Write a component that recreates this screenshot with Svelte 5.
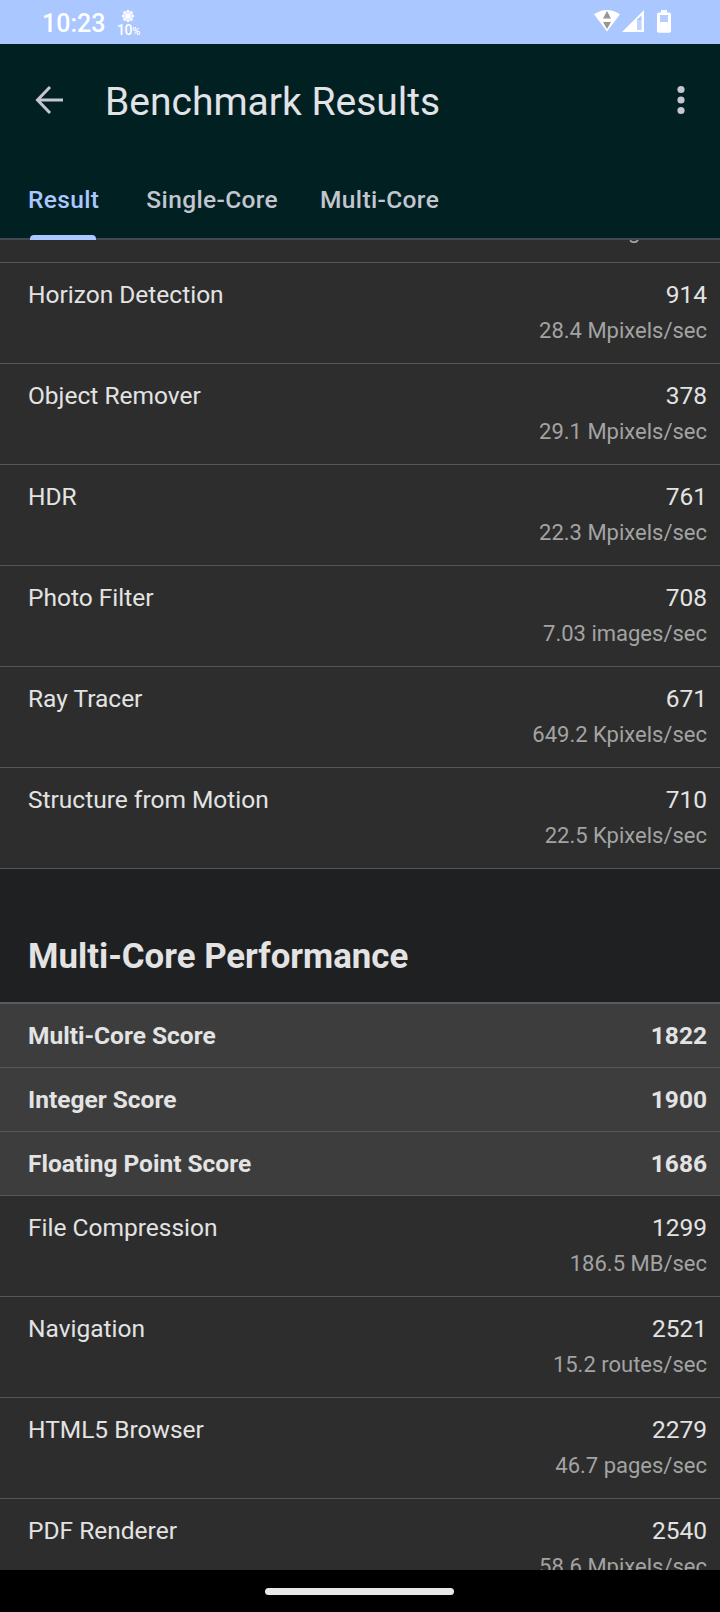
<script>
  const tabs = ['Result', 'Single-Core', 'Multi-Core'];
  const single = [
    ['Horizon Detection', '914', '28.4 Mpixels/sec'],
    ['Object Remover', '378', '29.1 Mpixels/sec'],
    ['HDR', '761', '22.3 Mpixels/sec'],
    ['Photo Filter', '708', '7.03 images/sec'],
    ['Ray Tracer', '671', '649.2 Kpixels/sec'],
    ['Structure from Motion', '710', '22.5 Kpixels/sec']
  ];
  const scores = [
    ['Multi-Core Score', '1822'],
    ['Integer Score', '1900'],
    ['Floating Point Score', '1686']
  ];
  const multi = [
    ['File Compression', '1299', '186.5 MB/sec'],
    ['Navigation', '2521', '15.2 routes/sec'],
    ['HTML5 Browser', '2279', '46.7 pages/sec'],
    ['PDF Renderer', '2540', '58.6 Mpixels/sec']
  ];
</script>

{#snippet row([name, score, rate])}
  <div class="row">
    <span>{name}</span>
    <div class="values">
      <span>{score}</span>
      <span class="rate">{rate}</span>
    </div>
  </div>
{/snippet}

<div class="screen">
  <div class="status">
    <span class="time">10:23</span>
    <div class="brightness">
      <svg width="14" height="14" viewBox="0 0 14 14">
        <path d="M7 .3L8.700 2.500 11.700 2.300 11.500 5.300 13.700 7 11.500 8.700 11.700 11.700 8.700 11.500 7 13.700 5.300 11.500 2.300 11.700 2.500 8.700 .3 7 2.500 5.300 2.300 2.300 5.300 2.500Z" fill="#fff" />
        <circle cx="7" cy="7" r="3.400" fill="none" stroke="#aac7ff" stroke-width=".6" />
      </svg>
      <span class="pct">10<small>%</small></span>
    </div>
    <svg class="signals" width="80" height="26" viewBox="0 0 80 26">
      <path d="M0 6.300Q13-2.500 26 6.300L13 23.500Z" fill="#fff" />
      <path d="M13 3l4 7.500H9ZM9 14h8L13 21Z" fill="#969696" />
      <path fill-rule="evenodd" d="M28 24L50 2V24ZM43 11.500V22H47.500V7.500Z" fill="#fff" />
      <path d="M43 12H47.500V22H43Z" fill="#fff" opacity=".25" />
      <path d="M67 2h6v2.500h2.200q1.800 0 1.800 1.800V23q0 1.800-1.800 1.800H64.800q-1.800 0-1.800-1.800V6.300q0-1.800 1.800-1.800h2.200Z" fill="#fff" />
      <path d="M66 7h8v7h-8Z" fill="#b6ceff" />
    </svg>
  </div>

  <header>
    <div class="bar">
      <svg class="back" width="30" height="30" viewBox="0 0 30 30" fill="none" stroke="#c7c6d0" stroke-width="3">
        <path d="M16 2L3.500 15l12.500 13M3 15h26" />
      </svg>
      <h1>Benchmark Results</h1>
      <svg class="more" width="8" height="30" viewBox="0 0 8 30" fill="#c7c6d0">
        <circle cx="4" cy="4.500" r="3.600" /><circle cx="4" cy="15" r="3.600" /><circle cx="4" cy="25.500" r="3.600" />
      </svg>
    </div>
    <nav>
      {#each tabs as tab, i}
        <div class="tab" class:active={i === 0}>{tab}</div>
      {/each}
    </nav>
  </header>

  <main>
    <div class="clipped"><span class="rate">images/sec</span></div>
    {#each single as item}{@render row(item)}{/each}
    <h2>Multi-Core Performance</h2>
    {#each scores as [name, score]}
      <div class="row score"><span>{name}</span><span>{score}</span></div>
    {/each}
    {#each multi as item}{@render row(item)}{/each}
  </main>

  <footer><div class="handle"></div></footer>
</div>

<style>
  :global(body) { margin: 0; background: #000; }
  .screen {
    width: 720px; height: 1612px; display: flex; flex-direction: column;
    overflow: hidden; font-family: Roboto, sans-serif; color: #e3e3e3;
  }
  .status {
    height: 44px; flex: none; box-sizing: border-box; background: #aac7ff; color: #fff;
    display: flex; align-items: flex-start; padding: 8px 46px 0 42px;
  }
  .time { font-size: 25px; line-height: 32px; font-weight: 500; }
  .brightness { display: flex; flex-direction: column; align-items: center; margin: 1px 0 0 12px; width: 22px; }
  .brightness svg { display: block; }
  .pct { font-size: 14px; line-height: 14px; font-weight: 500; white-space: nowrap; letter-spacing: -.4px; }
  small { font-size: 11px; }
  .signals { margin-left: auto; }
  header { height: 196px; flex: none; box-sizing: border-box; background: #002022; border-bottom: 2px solid #43474e; }
  .bar { height: 113px; display: flex; align-items: center; padding: 0 35px 0 34px; }
  .back, .more { margin-bottom: 2px; }
  h1 { margin: 2px auto 0 41px; font-size: 39px; line-height: 46px; font-weight: 400; color: #e3e2e6; }
  nav { display: flex; height: 81px; padding-left: 28px; gap: 47px; font-size: 24.5px; font-weight: 500; color: #c3c6cf; }
  .tab { line-height: 85px; height: 83px; position: relative; letter-spacing: .36px; }
  .tab:last-child { margin-left: -5px; }
  .active { color: #aac7ff; }
  .active::after {
    content: ''; position: absolute; left: 2px; width: 66px; bottom: 0; height: 5px;
    background: #aac7ff; border-radius: 4px 4px 0 0;
  }
  main { flex: 1; min-height: 0; overflow: hidden; background: #1f2022; display: flex; flex-direction: column; }
  .clipped {
    height: 23px; flex: none; box-sizing: border-box; background: #2d2d2d; border-bottom: 1px solid #565656;
    display: flex; align-items: flex-end; justify-content: flex-end; padding: 0 13px 18px 0; overflow: hidden;
  }
  .row {
    height: 101px; flex: none; box-sizing: border-box; display: flex; justify-content: space-between;
    padding: 18px 13px 0 28px; background: #2d2d2d; border-bottom: 1px solid #565656;
    font-size: 24.5px; line-height: 28px;
  }
  .values { display: flex; flex-direction: column; align-items: flex-end; gap: 9px; }
  .rate { font-size: 22px; line-height: 26px; color: #a3a3a3; }
  h2 {
    flex: none; box-sizing: border-box; height: 135px; margin: 0; padding: 66px 28px 0; border-bottom: 2px solid #5a5b5d;
    font-size: 34.8px; line-height: 42px; font-weight: 700;
  }
  .score { height: 64px; background: #3d3d3d; font-weight: 700; }
  footer { height: 42px; flex: none; background: #000; display: flex; justify-content: center; align-items: center; }
  .handle { width: 189px; height: 7px; border-radius: 4px; background: #e8e8e8; margin-right: 1px; }
</style>
